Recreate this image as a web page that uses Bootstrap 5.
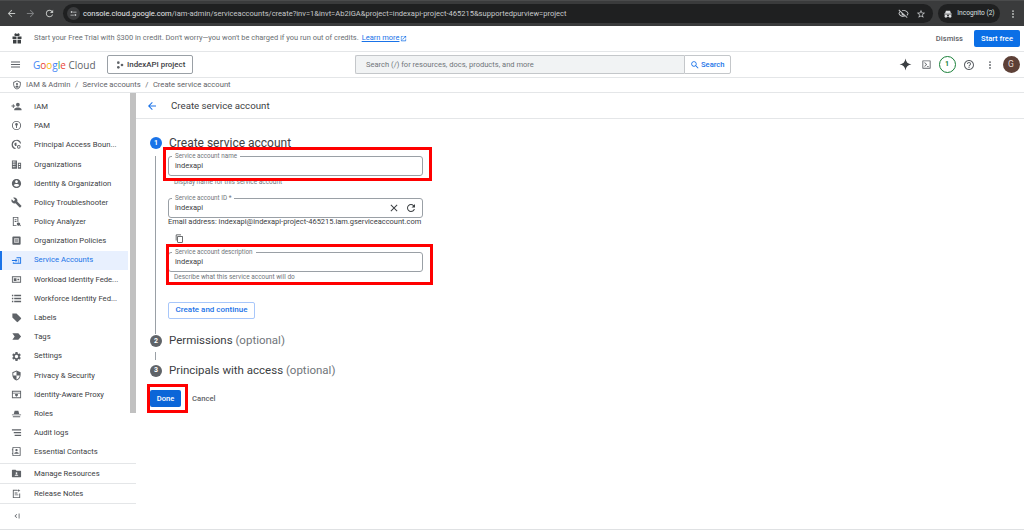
<!DOCTYPE html>
<html lang="en"><head><meta charset="utf-8"><title>Create service account</title>
<link href="https://cdn.jsdelivr.net/npm/bootstrap@5.3.0/dist/css/bootstrap.min.css" rel="stylesheet">
<style>
html,body{height:530px;overflow:hidden;background:#fff}
body{font-family:Roboto,"Liberation Sans",sans-serif;color:#3c4043;font-size:7.7px;line-height:1.2;position:relative}
svg{fill:currentColor;flex:none;display:block}
.chrome-bar{height:26px;background:#3a3b3c;border-top:1px solid #4a4b4c;padding:0 6px 0 6px;color:#c4c7c5}
.url-pill{background:#1f2021;border-radius:10px;height:19px;width:870px;margin-left:8px;color:#c7c9cb;font-size:7.55px;padding:0 7px 0 4px}
.url-chip{width:13px;height:13px;border-radius:50%;background:#3b3c3e;margin-right:3px}
.url-text b{font-weight:400;color:#e8eaed}
.incog{background:#1f2021;border-radius:10px;height:19px;width:62px;margin-left:5px;font-size:6.6px;color:#dfe1e3;justify-content:center}
.promo{height:26px;border-bottom:1px solid #e4e6e8;padding:0 4px 0 11px;color:#6b6f73;font-size:7.48px}
.promo a{color:#1a73e8;text-decoration:underline;margin-left:3px}
.dismiss{color:#5f6368;font-weight:500;font-size:7.6px;margin-right:11px}
.start-free{background:#0b6fe6;color:#fff;font-weight:500;font-size:7.6px;height:17px;width:46px;border-radius:2px}
.top-head{height:26px;border-bottom:1px solid #e4e6e8;padding:0 4.500px 0 10px}
.gc-logo{font-size:10px;margin-left:12px;width:62px;white-space:nowrap;color:#5f6368;font-family:"Open Sans",Roboto,sans-serif}
.gc-logo i{font-style:normal}
.proj-btn{border:1px solid #9aa0a6;border-radius:2px;height:19px;width:86px;margin-left:12px;padding-left:8px;gap:3px;font-size:7.900px;color:#3c4043;font-weight:500;white-space:nowrap}
.search-wrap{margin-left:162px;width:376px;height:19px}
.search-in{flex:1;background:#f1f3f4;border:1px solid #c4c7ca;border-right:0;border-radius:2px 0 0 2px;padding-left:10px;color:#70757a;font-size:7.55px}
.search-btn{width:47px;border:1px solid #c4c7ca;border-radius:0 2px 2px 0;color:#1a73e8;font-weight:500;font-size:7.6px;padding-left:5px;gap:1px}
.head-tools{margin-left:auto;color:#5f6368}
.counter{width:17px;height:17px;border:1.5px solid #188038;border-radius:50%;color:#188038;font-size:7px;font-weight:700}
.avatar{width:17px;height:17px;border-radius:50%;background:#5d4037;color:#e7d8d2;font-size:8.5px}
.crumbs{height:15px;border-bottom:1px solid #e4e6e8;padding-left:12px;color:#5f6368;font-size:7.65px;gap:4px}
.crumb-sep{margin:0 .5px}
.work{height:437px;border-bottom:1px solid #dfe1e3}
.side-rail{width:136px;position:relative}
.side-rail .list-group-item{border:0;padding:0 0 0 11px;height:19.2px;font-size:7.7px;color:#3c4043;display:flex;align-items:center;background:transparent;border-radius:0}
.side-rail .list-group-item svg{color:#5f6368;width:11px;height:11px;margin-right:12px}
.side-rail .list-group-item.on{background:#e8f0fe;color:#1a73e8;width:128px;box-shadow:inset 2px 0 0 #1a73e8}
.side-rail .list-group-item.on svg{color:#1a73e8}
.side-scroll{position:absolute;left:130px;top:0;width:6px;height:320px;background:#c1c1c1}
.side-foot{border-top:1px solid #e4e6e8}
.main-pane{flex:1}
.page-head{height:26px;border-bottom:1px solid #e4e6e8;padding-left:10px;font-size:9.700px;color:#3c4043;gap:13px}
.page-head svg{color:#1a73e8}
.steps{padding:17px 0 0 14px;position:relative}
.step-num{width:12px;height:12px;border-radius:50%;background:#5f6368;color:#fff;font-size:7px;font-weight:700}
.step-num.act{background:#1a73e8}
.step-title{font-size:11.500px;color:#3c4043;margin-left:7px}
.step-title.big{font-size:12px}
.step-title span{color:#70757a}
.step-body{margin-left:5px;border-left:1px solid #9aa0a6;padding:0 0 15px 12px;width:280px}
.step-gap{margin-left:5px;border-left:1px solid #9aa0a6;height:8px;margin-top:4px}
.fld{position:relative;border:1px solid #9aa0a6;border-radius:3px;height:20px;width:255px;padding:4px 0 0 6px;font-size:7.5px;color:#3c4043;line-height:1.2}
.fld.first{margin-top:6px}
.fld-lab{position:absolute;left:3px;top:-4px;background:#fff;padding:0 3px;font-size:6.3px;color:#70757a;white-space:nowrap}
.fld-acts{position:absolute;right:5px;top:3px;gap:5px;color:#3c4043}
.hint{font-size:6.500px;color:#70757a;padding-left:6px;height:22px;line-height:8px}
.email-line{font-size:7.47px;color:#3c4043;white-space:nowrap;margin-top:-1px;line-height:10px}
.copy-ic{color:#3c4043;margin:7px 0 8.500px 7px}
.btn-create{border:1px solid #a8c7fa;border-radius:2px;color:#1a73e8;font-weight:500;font-size:8px;height:17px;width:87px;background:#fff;margin-top:8px}
.done-btn{background:#0b66d8;color:#fff;font-weight:500;font-size:7.6px;border-radius:2px;width:31px;height:17px;margin-right:11px}
.cancel-lnk{font-size:7.700px;color:#5f6368;font-weight:500}
.red-box{position:absolute;border:3px solid #f00;pointer-events:none}
</style></head><body>
<svg width="0" height="0" style="position:absolute"><defs>
<symbol id="i-back" viewBox="0 0 24 24"><path d="M20 11H7.83l5.59-5.59L12 4l-8 8 8 8 1.41-1.41L7.83 13H20v-2z"/></symbol>
<symbol id="i-fwd" viewBox="0 0 24 24"><path d="M12 4l-1.41 1.41L16.17 11H4v2h12.17l-5.58 5.59L12 20l8-8z"/></symbol>
<symbol id="i-refresh" viewBox="0 0 24 24"><path d="M17.65 6.35C16.2 4.9 14.21 4 12 4c-4.42 0-7.99 3.58-7.99 8s3.57 8 7.99 8c3.73 0 6.84-2.55 7.73-6h-2.08c-.82 2.33-3.04 4-5.65 4-3.31 0-6-2.69-6-6s2.69-6 6-6c1.66 0 3.14.69 4.22 1.78L13 11h7V4l-2.35 2.35z"/></symbol>
<symbol id="i-close" viewBox="0 0 24 24"><path d="M19 6.41L17.59 5 12 10.59 6.41 5 5 6.41 10.59 12 5 17.59 6.41 19 12 13.41 17.59 19 19 17.59 13.41 12z"/></symbol>
<symbol id="i-copy" viewBox="0 0 24 24"><path d="M16 1H4c-1.1 0-2 .9-2 2v14h2V3h12V1zm3 4H8c-1.1 0-2 .9-2 2v14c0 1.1.9 2 2 2h11c1.1 0 2-.9 2-2V7c0-1.1-.9-2-2-2zm0 16H8V7h11v14z"/></symbol>
<symbol id="i-search" viewBox="0 0 24 24"><path d="M15.5 14h-.79l-.28-.27C15.41 12.59 16 11.11 16 9.5 16 5.91 13.09 3 9.5 3S3 5.91 3 9.5 5.91 16 9.5 16c1.61 0 3.09-.59 4.23-1.57l.27.28v.79l5 4.99L20.49 19l-4.99-5zm-6 0C7.01 14 5 11.99 5 9.5S7.01 5 9.5 5 14 7.01 14 9.5 11.99 14 9.5 14z"/></symbol>
<symbol id="i-star" viewBox="0 0 24 24"><path d="M22 9.24l-7.19-.62L12 2 9.19 8.63 2 9.24l5.46 4.73L5.82 21 12 17.27 18.18 21l-1.63-7.03L22 9.24zM12 15.4l-3.76 2.27 1-4.28-3.32-2.88 4.38-.38L12 6.1l1.71 4.04 4.38.38-3.32 2.88 1 4.28L12 15.4z"/></symbol>
<symbol id="i-help" viewBox="0 0 24 24"><path d="M11 18h2v-2h-2v2zm1-16C6.48 2 2 6.48 2 12s4.48 10 10 10 10-4.48 10-10S17.52 2 12 2zm0 18c-4.41 0-8-3.59-8-8s3.59-8 8-8 8 3.59 8 8-3.59 8-8 8zm0-14c-2.21 0-4 1.79-4 4h2c0-1.1.9-2 2-2s2 .9 2 2c0 2-3 1.75-3 5h2c0-2.25 3-2.5 3-5 0-2.21-1.79-4-4-4z"/></symbol>
<symbol id="i-vert" viewBox="0 0 24 24"><circle cx="12" cy="5" r="2.2"/><circle cx="12" cy="12" r="2.2"/><circle cx="12" cy="19" r="2.2"/></symbol>
<symbol id="i-menu" viewBox="0 0 24 24"><path d="M3 18h18v-2H3v2zm0-5h18v-2H3v2zm0-7v2h18V6H3z"/></symbol>
<symbol id="i-gift" viewBox="0 0 24 24"><path d="M3 7h8v5H3zM13 7h8v5h-8zM4 13.5h7V21H4zM13 13.5h7V21h-7zM7 2.5a2.5 2.5 0 0 1 5 1.5 2.5 2.5 0 0 1 5-1.5c1 1.500 0 3.500-2 3.500H9C7 6 6 4 7 2.500z"/></symbol>
<symbol id="i-ext" viewBox="0 0 24 24"><path d="M19 19H5V5h7V3H5a2 2 0 0 0-2 2v14a2 2 0 0 0 2 2h14c1.100 0 2-.9 2-2v-7h-2v7zM14 3v2h3.590l-9.830 9.830 1.410 1.410L19 6.410V10h2V3h-7z"/></symbol>
<symbol id="i-proj" viewBox="0 0 24 24"><circle cx="7" cy="5" r="4"/><circle cx="7" cy="19" r="4"/><circle cx="18" cy="12" r="4"/></symbol>
<symbol id="i-spark" viewBox="0 0 24 24"><path d="M12 1c.8 6.500 4.500 10.200 11 11-6.500.8-10.200 4.500-11 11-.8-6.500-4.500-10.200-11-11 6.500-.8 10.200-4.500 11-11z"/></symbol>
<symbol id="i-term" viewBox="0 0 24 24"><path d="M20 3H4a1 1 0 0 0-1 1v16a1 1 0 0 0 1 1h16a1 1 0 0 0 1-1V4a1 1 0 0 0-1-1zm-1 16H5V5h14v14zM7 8l4 4-4 4 1.300 1 5-5-5-5zM13 15h4v2h-4z"/></symbol>
<symbol id="i-eyeoff" viewBox="0 0 24 24"><path d="M12 6c3.800 0 7.200 2.100 9 6-.6 1.300-1.400 2.400-2.400 3.300l1.400 1.400C21.300 15.500 22.400 13.900 23 12c-1.700-4.400-6-7.500-11-7.500-1.300 0-2.500.2-3.700.6l1.700 1.600c.6-.4 1.300-.7 2-.7zM2.400 3.300 1 4.700l2.700 2.700C2.500 8.600 1.600 10.200 1 12c1.700 4.400 6 7.500 11 7.500 1.500 0 3-.3 4.400-.8l3 3 1.400-1.400L2.400 3.300zM12 17.500c-3.800 0-7.200-2.100-9-5.500.6-1.200 1.500-2.300 2.500-3.100l2.300 2.300a4.500 4.500 0 0 0 5.500 5.500l1.400 1.400c-.9.300-1.800.4-2.700.4z"/></symbol>
<symbol id="i-tune" viewBox="0 0 24 24"><circle cx="7" cy="8" r="2.500"/><path d="M11 7h9v2h-9zM4 15h9v2H4z"/><circle cx="17" cy="16" r="2.500"/></symbol>
<symbol id="i-incog" viewBox="0 0 24 24"><path d="M3 11h18v2H3zM7 4h10l2 6H5zM7 14a3.500 3.500 0 1 0 0 7 3.500 3.500 0 0 0 0-7zm10 0a3.500 3.500 0 1 0 0 7 3.500 3.500 0 0 0 0-7zM10 16.500h4v2h-4z"/></symbol>
<symbol id="i-shield" viewBox="0 0 24 24"><path d="M12 1 3 5v6c0 5.550 3.840 10.740 9 12 5.160-1.260 9-6.450 9-12V5l-9-4zm0 2.200 7 3.100V11c0 4.500-3 8.800-7 10-4-1.200-7-5.500-7-10V6.300l7-3.100zM12 7a2.500 2.500 0 1 0 0 5 2.500 2.500 0 0 0 0-5zm-4 9c.8-1.800 2.300-2.800 4-2.800s3.200 1 4 2.800c-1 1.300-2.400 2.200-4 2.600-1.600-.4-3-1.300-4-2.600z"/></symbol>
<symbol id="i-padd" viewBox="0 0 24 24"><path d="M15 12c2.210 0 4-1.790 4-4s-1.790-4-4-4-4 1.790-4 4 1.790 4 4 4zm-9-2V7H4v3H1v2h3v3h2v-3h3v-2H6zm9 4c-2.670 0-8 1.340-8 4v2h16v-2c0-2.660-5.330-4-8-4z"/></symbol>
<symbol id="i-pam" viewBox="0 0 24 24"><path d="M12 2a10 10 0 1 0 0 20 10 10 0 0 0 0-20zm0 2a8 8 0 1 1 0 16 8 8 0 0 1 0-16zm0 2.500a3 3 0 0 0-1 5.800V17.500h2v-5.200a3 3 0 0 0-1-5.800z"/></symbol>
<symbol id="i-pab" viewBox="0 0 24 24"><path d="M11 2a10 10 0 0 0-1 19.900v-2.100A8 8 0 1 1 19.900 10h2.100A10 10 0 0 0 11 2zM17 13a4 4 0 1 0 0 8 4 4 0 0 0 0-8zm0 2a2 2 0 1 1 0 4 2 2 0 0 1 0-4zM9 8l-2 3 2 4h3v-7z"/></symbol>
<symbol id="i-org" viewBox="0 0 24 24"><path d="M2 3h11v18H2zm2 2v3h2V5zm3.500 0v3h2V5zM4 10v3h2v-3zm3.500 0v3h2v-3zM4 15v3h2v-3zm3.500 0v3h2v-3zM15 8h7v13h-7zm2 2.500v2.500h3v-2.500zm0 4.500v3h3v-3z"/></symbol>
<symbol id="i-acct" viewBox="0 0 24 24"><path d="M12 2C6.480 2 2 6.480 2 12s4.480 10 10 10 10-4.480 10-10S17.520 2 12 2zm0 3c1.660 0 3 1.340 3 3s-1.340 3-3 3-3-1.340-3-3 1.340-3 3-3zm0 14.200c-2.500 0-4.710-1.280-6-3.220.03-1.990 4-3.080 6-3.080 1.990 0 5.970 1.090 6 3.080-1.290 1.940-3.500 3.220-6 3.220z"/></symbol>
<symbol id="i-build" viewBox="0 0 24 24"><path d="M22.700 19l-9.100-9.100c.9-2.300.4-5-1.500-6.900-2-2-5-2.400-7.400-1.300L9 6 6 9 1.600 4.700C.4 7.100.9 10.100 2.900 12.100c1.900 1.900 4.600 2.400 6.900 1.500l9.100 9.100c.4.4 1 .4 1.400 0l2.300-2.300c.5-.4.5-1.100.1-1.400z"/></symbol>
<symbol id="i-anal" viewBox="0 0 24 24"><path d="M4 2h12v11h-2V4H6v16h6v2H4zM8 7h4v2H8zM8 11h4v2H8zM16.500 14a3.500 3.500 0 1 0 2 6.300l2 2 1.300-1.300-2-2A3.500 3.500 0 0 0 16.500 14z"/></symbol>
<symbol id="i-pol" viewBox="0 0 24 24"><path d="M5 3h14a2 2 0 0 1 2 2v14a2 2 0 0 1-2 2H5a2 2 0 0 1-2-2V5a2 2 0 0 1 2-2zm2 4v10h10V7z"/><rect x="8" y="8" width="8" height="8" opacity=".6"/></symbol>
<symbol id="i-svc" viewBox="0 0 24 24"><path d="M12 5h10v14H4v-3h2v1h14V7H12zM10 8l4 4-4 4v-3H2v-2h8zM15 10h3v2h-3zM15 14h3v2h-3z"/></symbol>
<symbol id="i-wl" viewBox="0 0 24 24"><path d="M2 5h20v14H2zm2 2v10h16V7zm2 2h6v6H6zm8 1.500h4v3h-4z"/></symbol>
<symbol id="i-wf" viewBox="0 0 24 24"><path d="M2 4h3v3H2zM7 4h15v3H7zM2 10.500h3v3H2zM7 10.500h15v3H7zM2 17h3v3H2zM7 17h15v3H7z"/></symbol>
<symbol id="i-label" viewBox="0 0 24 24"><path d="M3 3h9l9.500 9.500a2 2 0 0 1 0 2.800l-6.200 6.200a2 2 0 0 1-2.800 0L3 12z"/></symbol>
<symbol id="i-tag" viewBox="0 0 24 24"><path d="M3 5h13l6 7-6 7H3l5-7z"/></symbol>
<symbol id="i-set" viewBox="0 0 24 24"><path d="M19.140 12.940c.04-.3.06-.61.06-.94 0-.32-.02-.64-.07-.94l2.030-1.580a.49.49 0 00.12-.61l-1.920-3.320a.488.488 0 00-.59-.22l-2.390.96c-.5-.38-1.030-.7-1.620-.94l-.36-2.540a.484.484 0 00-.48-.41h-3.840c-.24 0-.43.17-.47.41l-.36 2.540c-.59.24-1.130.57-1.620.94l-2.390-.96c-.22-.08-.47 0-.59.22L2.740 8.870c-.12.21-.08.47.12.61l2.030 1.580c-.05.3-.09.63-.09.94s.02.64.07.94l-2.030 1.580a.49.49 0 00-.12.61l1.920 3.320c.12.22.37.29.59.22l2.390-.96c.5.38 1.030.7 1.620.94l.36 2.540c.05.24.24.41.48.41h3.840c.24 0 .44-.17.47-.41l.36-2.540c.59-.24 1.130-.56 1.620-.94l2.390.96c.22.08.47 0 .59-.22l1.920-3.320c.12-.22.07-.47-.12-.61l-2.010-1.580zM12 15.600c-1.980 0-3.600-1.620-3.600-3.600s1.620-3.600 3.600-3.600 3.600 1.620 3.600 3.600-1.620 3.600-3.600 3.600z"/></symbol>
<symbol id="i-priv" viewBox="0 0 24 24"><path d="M12 1 3 5v6c0 5.550 3.840 10.740 9 12 5.160-1.260 9-6.450 9-12V5l-9-4zm0 11h7c-.53 4.120-3.280 7.790-7 8.940V12H5V6.300l7-3.110V12z"/></symbol>
<symbol id="i-iap" viewBox="0 0 24 24"><path d="M2 4h20v16H2zm2 2v2h16V6zm0 4v8h16v-8zm5 1h6v3l-3 3-3-3z"/></symbol>
<symbol id="i-roles" viewBox="0 0 24 24"><path d="M8 6h8l2 7H6zM2 14h20v2H2zM4 18h16v2H4z"/></symbol>
<symbol id="i-audit" viewBox="0 0 24 24"><path d="M2 5h20v2.500H2zM6 11h16v2.500H6zM8 17h14v2.500H8z"/></symbol>
<symbol id="i-cont" viewBox="0 0 24 24"><path d="M5 2h14a2 2 0 0 1 2 2v16a2 2 0 0 1-2 2H5a2 2 0 0 1-2-2V4a2 2 0 0 1 2-2zm0 2v16h14V4zm7 2.500a2.500 2.500 0 1 1 0 5 2.500 2.500 0 0 1 0-5zM7 17c0-2.500 2.500-4 5-4s5 1.500 5 4zM2 7h2v2H2zM2 15h2v2H2z"/></symbol>
<symbol id="i-folder" viewBox="0 0 24 24"><path d="M3 4h7l2 2h9a1 1 0 0 1 1 1v12a1 1 0 0 1-1 1H3a1 1 0 0 1-1-1V5a1 1 0 0 1 1-1zm9 5a2 2 0 1 0 0 4 2 2 0 0 0 0-4zm-4 8h8c0-1.800-1.800-3-4-3s-4 1.200-4 3z"/></symbol>
<symbol id="i-notes" viewBox="0 0 24 24"><path d="M4 4h10v2H6v14h12v-8h2v10H4zM8 10h6v2H8zM8 14h8v2H8zM17 2l1 2.500L20.500 5.500 18 6.500 17 9l-1-2.500L13.500 5.500 16 4.500z"/></symbol>
<symbol id="i-collapse" viewBox="0 0 24 24"><path d="M11 7l-5 5 5 5 1.300-1.300L8.600 12l3.700-3.700zM16 6h2v12h-2z"/></symbol>
</defs></svg>

<div class="chrome-bar d-flex align-items-center">
  <svg width="11" height="11"><use href="#i-back"/></svg>
  <svg width="11" height="11" style="margin-left:8px;color:#7d7f81"><use href="#i-fwd"/></svg>
  <svg width="11" height="11" style="margin-left:8px"><use href="#i-refresh"/></svg>
  <div class="url-pill d-flex align-items-center">
    <span class="url-chip d-flex align-items-center justify-content-center"><svg width="9" height="9"><use href="#i-tune"/></svg></span>
    <span class="url-text text-nowrap"><b>console.cloud.google.com</b>/iam-admin/serviceaccounts/create?inv=1&amp;invt=Ab2IGA&amp;project=indexapi-project-465215&amp;supportedpurview=project</span>
    <svg class="ms-auto" width="11" height="11"><use href="#i-eyeoff"/></svg>
    <svg width="10" height="10" style="margin-left:7px"><use href="#i-star"/></svg>
  </div>
  <div class="incog d-flex align-items-center gap-1"><svg width="10" height="10"><use href="#i-incog"/></svg>Incognito (2)</div>
  <svg class="ms-auto" width="10" height="10"><use href="#i-vert"/></svg>
</div>

<div class="promo d-flex align-items-center">
  <svg width="12" height="12" style="color:#3c4043;margin-right:11px"><use href="#i-gift"/></svg>
  <span>Start your Free Trial with $300 in credit. Don't worry—you won't be charged if you run out of credits.</span>
  <a href="#">Learn more</a><svg width="7" height="7" style="color:#1a73e8;margin-left:1px"><use href="#i-ext"/></svg>
  <span class="dismiss ms-auto">Dismiss</span>
  <span class="start-free d-flex align-items-center justify-content-center">Start free</span>
</div>

<div class="top-head d-flex align-items-center">
  <svg width="11" height="11" style="color:#5f6368;transform:scale(1.1)"><use href="#i-menu"/></svg>
  <span class="gc-logo"><i style="color:#4285f4">G</i><i style="color:#ea4335">o</i><i style="color:#fbbc04">o</i><i style="color:#4285f4">g</i><i style="color:#34a853">l</i><i style="color:#ea4335">e</i> Cloud</span>
  <div class="proj-btn d-flex align-items-center"><svg width="8" height="8" style="color:#5f6368"><use href="#i-proj"/></svg>IndexAPI project</div>
  <div class="search-wrap d-flex">
    <div class="search-in d-flex align-items-center">Search (/) for resources, docs, products, and more</div>
    <div class="search-btn d-flex align-items-center"><svg width="10" height="10"><use href="#i-search"/></svg>Search</div>
  </div>
  <div class="head-tools d-flex align-items-center">
    <svg width="13" height="13" style="color:#3c4043"><use href="#i-spark"/></svg>
    <svg width="11" height="11" style="margin-left:9px"><use href="#i-term"/></svg>
    <span class="counter d-flex align-items-center justify-content-center" style="margin-left:7px">1</span>
    <svg width="12" height="12" style="margin-left:7px"><use href="#i-help"/></svg>
    <svg width="10" height="10" style="margin-left:10px"><use href="#i-vert"/></svg>
    <span class="avatar d-flex align-items-center justify-content-center" style="margin-left:8px">G</span>
  </div>
</div>

<div class="crumbs d-flex align-items-center">
  <svg width="10" height="10"><use href="#i-shield"/></svg><span>IAM &amp; Admin</span><span class="crumb-sep">/</span><span>Service accounts</span><span class="crumb-sep">/</span><span>Create service account</span>
</div>

<div class="work d-flex">
  <nav class="side-rail d-flex flex-column">
    <div class="list-group list-group-flush" style="padding-top:4px">
      <a class="list-group-item"><svg><use href="#i-padd"/></svg>IAM</a>
      <a class="list-group-item"><svg><use href="#i-pam"/></svg>PAM</a>
      <a class="list-group-item"><svg><use href="#i-pab"/></svg>Principal Access Boun...</a>
      <a class="list-group-item"><svg><use href="#i-org"/></svg>Organizations</a>
      <a class="list-group-item"><svg><use href="#i-acct"/></svg>Identity &amp; Organization</a>
      <a class="list-group-item"><svg><use href="#i-build"/></svg>Policy Troubleshooter</a>
      <a class="list-group-item"><svg><use href="#i-anal"/></svg>Policy Analyzer</a>
      <a class="list-group-item"><svg><use href="#i-pol"/></svg>Organization Policies</a>
      <a class="list-group-item on"><svg><use href="#i-svc"/></svg>Service Accounts</a>
      <a class="list-group-item"><svg><use href="#i-wl"/></svg>Workload Identity Fede...</a>
      <a class="list-group-item"><svg><use href="#i-wf"/></svg>Workforce Identity Fed...</a>
      <a class="list-group-item"><svg><use href="#i-label"/></svg>Labels</a>
      <a class="list-group-item"><svg><use href="#i-tag"/></svg>Tags</a>
      <a class="list-group-item"><svg><use href="#i-set"/></svg>Settings</a>
      <a class="list-group-item"><svg><use href="#i-priv"/></svg>Privacy &amp; Security</a>
      <a class="list-group-item"><svg><use href="#i-iap"/></svg>Identity-Aware Proxy</a>
      <a class="list-group-item"><svg><use href="#i-roles"/></svg>Roles</a>
      <a class="list-group-item"><svg><use href="#i-audit"/></svg>Audit logs</a>
      <a class="list-group-item"><svg><use href="#i-cont"/></svg>Essential Contacts</a>
    </div>
    <div class="side-foot list-group list-group-flush" style="margin-top:1px">
      <a class="list-group-item"><svg><use href="#i-folder"/></svg>Manage Resources</a>
    </div>
    <div class="side-foot list-group list-group-flush">
      <a class="list-group-item"><svg><use href="#i-notes"/></svg>Release Notes</a>
    </div>
    <div class="side-foot d-flex align-items-center" style="height:28px;padding-left:12px;color:#5f6368"><svg width="10" height="10"><use href="#i-collapse"/></svg></div>
    <span class="side-scroll"></span>
  </nav>

  <main class="main-pane">
    <div class="page-head d-flex align-items-center"><svg width="12" height="12"><use href="#i-back"/></svg><span>Create service account</span></div>
    <div class="steps">
      <div class="d-flex align-items-center"><span class="step-num act d-flex align-items-center justify-content-center">1</span><span class="step-title big">Create service account</span></div>
      <div class="step-body">
        <div class="fld first"><span class="fld-lab">Service account name</span>indexapi</div>
        <div class="hint" style="padding-top:2px">Display name for this service account</div>
        <div class="fld"><span class="fld-lab">Service account ID *</span>indexapi
          <span class="fld-acts d-flex"><svg width="12" height="12"><use href="#i-close"/></svg><svg width="12" height="12"><use href="#i-refresh"/></svg></span></div>
        <div class="email-line">Email address: indexapi@indexapi-project-465215.iam.gserviceaccount.com</div>
        <svg class="copy-ic" width="9" height="9"><use href="#i-copy"/></svg>
        <div class="fld"><span class="fld-lab">Service account description</span>indexapi</div>
        <div class="hint" style="padding-top:1px">Describe what this service account will do</div>
        <button class="btn btn-create d-flex align-items-center justify-content-center p-0">Create and continue</button>
      </div>
      <div class="d-flex align-items-center"><span class="step-num d-flex align-items-center justify-content-center">2</span><span class="step-title">Permissions <span>(optional)</span></span></div>
      <div class="step-gap"></div>
      <div class="d-flex align-items-center mt-1"><span class="step-num d-flex align-items-center justify-content-center">3</span><span class="step-title">Principals with access <span>(optional)</span></span></div>
      <div class="d-flex align-items-center" style="margin-top:13px">
        <button class="btn done-btn d-flex align-items-center justify-content-center p-0">Done</button><span class="cancel-lnk">Cancel</span>
      </div>
      <span class="red-box" style="left:27px;top:28px;width:269px;height:34px"></span>
      <span class="red-box" style="left:30px;top:125px;width:267px;height:41px"></span>
      <span class="red-box" style="left:11px;top:265px;width:41px;height:29px"></span>
    </div>
  </main>
</div>
</body></html>
